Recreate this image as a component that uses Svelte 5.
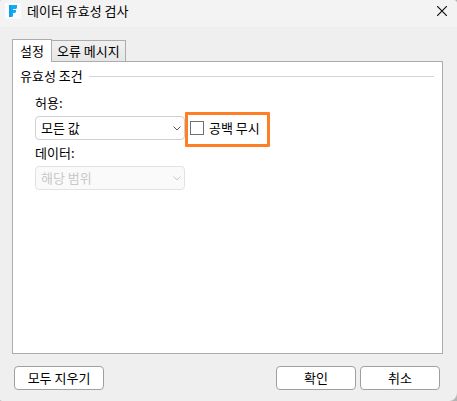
<script lang="ts">
	let activeTab = 'settings';
	let allow = 'any';
	let range = 'between';
	let ignoreBlank = false;

	const tabs = [
		{ id: 'settings', label: '설정' },
		{ id: 'error', label: '오류 메시지' }
	];

	const clearAll = () => {
		allow = 'any';
		range = 'between';
		ignoreBlank = false;
	};
</script>

<div class="dialog" role="dialog" aria-labelledby="dialog-title">
	<header>
		<svg class="logo" viewBox="0 0 16 16" aria-hidden="true">
			<rect width="16" height="16" rx="1" fill="#fcfcfc" />
			<path d="M4 2h8v3l-1 1H8v1h3v2l-1 1H8v3l-1 1H4z" fill="#12aaf0" />
			<path d="M4 2h2v12H4z" fill="#1688dc" opacity="0.4" />
		</svg>
		<h1 id="dialog-title">데이터 유효성 검사</h1>
		<button class="close" aria-label="닫기">
			<svg viewBox="0 0 10 10" aria-hidden="true">
				<path d="M0 0l10 10M10 0L0 10" stroke="#111" stroke-width="1.2" />
			</svg>
		</button>
	</header>

	<div class="content">
		<div class="tabs" role="tablist">
			{#each tabs as tab}
				<button
					class="tab"
					class:active={activeTab === tab.id}
					role="tab"
					aria-selected={activeTab === tab.id}
					on:click={() => (activeTab = tab.id)}
				>
					{tab.label}
				</button>
			{/each}
		</div>

		<div class="panel" role="tabpanel">
			{#if activeTab === 'settings'}
				<fieldset>
					<legend>유효성 조건</legend>
					<label class="field-label" for="allow">허용:</label>
					<div class="row">
						<div class="select">
							<select id="allow" bind:value={allow}>
								<option value="any">모든 값</option>
								<option value="list">목록</option>
							</select>
							<svg viewBox="0 0 8 5" aria-hidden="true">
								<path d="M0.5 0.5L4 4L7.5 0.5" />
							</svg>
						</div>
						<label class="check">
							<input type="checkbox" bind:checked={ignoreBlank} />
							공백 무시
						</label>
					</div>
					<label class="field-label" for="range">데이터:</label>
					<div class="row">
						<div class="select">
							<select id="range" bind:value={range} disabled={allow === 'any'}>
								<option value="between">해당 범위</option>
							</select>
							<svg viewBox="0 0 8 5" aria-hidden="true">
								<path d="M0.5 0.5L4 4L7.5 0.5" />
							</svg>
						</div>
					</div>
				</fieldset>
			{/if}
		</div>
	</div>

	<footer>
		<button class="btn wide" on:click={clearAll}>모두 지우기</button>
		<button class="btn">확인</button>
		<button class="btn">취소</button>
	</footer>
</div>

<style>
	:global(body) {
		background: #b5b5b5;
	}

	.dialog,
	.dialog :global(*) {
		box-sizing: border-box;
	}

	.dialog {
		display: flex;
		flex-direction: column;
		min-height: 100vh;
		background: #efefef;
		border-radius: 2px 4px 8px 2px;
		color: #000;
		font-family: 'Noto Sans CJK KR', sans-serif;
		font-size: 13px;
		line-height: 20px;
	}

	button,
	select {
		font: inherit;
		color: inherit;
	}

	header {
		display: flex;
		align-items: center;
		height: 27px;
		padding: 0 10px 5px 5px;
		background: #f3f3f3;
		border-radius: 2px 4px 0 0;
	}

	.logo {
		width: 16px;
		height: 16px;
		margin-right: 6px;
	}

	h1 {
		flex: 1;
		margin: 0;
		font-size: 13px;
		font-weight: normal;
		line-height: 20px;
	}

	.close {
		display: flex;
		padding: 0;
		border: none;
		background: none;
	}

	.close svg {
		width: 10px;
		height: 10px;
	}

	.content {
		flex: 1;
		display: flex;
		flex-direction: column;
		padding: 12px 14px 0 12px;
	}

	.tabs {
		display: flex;
		align-items: flex-end;
	}

	.tab {
		height: 21px;
		margin-left: -1px;
		padding: 0 5px;
		border: 1px solid #acacac;
		border-bottom: none;
		background: linear-gradient(#f0f0f0, #e6e6e6);
		line-height: 18px;
	}

	.tab.active {
		z-index: 1;
		height: 23px;
		margin: 0 0 -1px;
		padding: 0 7px;
		background: #fff;
	}

	.panel {
		flex: 1;
		padding: 4px 8px 12px 7px;
		border: 1px solid #acacac;
		background: #fff;
	}

	fieldset {
		min-width: 0;
		margin: 0;
		padding: 8px 0 0 15px;
		border: none;
		border-top: 1px solid #d5d5d5;
	}

	legend {
		margin-left: -15px;
		padding: 0 6px 0 0;
	}

	.field-label {
		display: block;
		height: 22px;
		line-height: 18px;
	}

	.row {
		display: flex;
		align-items: center;
		gap: 5px;
		margin-bottom: 4px;
	}

	.select {
		position: relative;
		width: 150px;
	}

	select {
		display: block;
		width: 100%;
		height: 24px;
		padding: 0 20px 0 5px;
		border: 1px solid #d0d0d0;
		border-radius: 4px;
		background: #fff;
		appearance: none;
	}

	select:disabled {
		border-color: #e2e2e2;
		background: #fafafa;
		color: #c8c8c8;
		opacity: 1;
	}

	.select svg {
		position: absolute;
		top: 10px;
		right: 4px;
		width: 8px;
		height: 5px;
		fill: none;
		stroke: #555;
		pointer-events: none;
	}

	select:disabled + svg {
		stroke: #c8c8c8;
	}

	.check {
		position: relative;
		display: flex;
		align-items: center;
		gap: 5px;
	}

	/* highlight frame around the option */
	.check::after {
		content: '';
		position: absolute;
		inset: -6px -10px -9px -5px;
		border: 3px solid #ff7f27;
		border-radius: 1px;
		pointer-events: none;
	}

	.check input {
		width: 14px;
		height: 14px;
		margin: 0;
		border: 1px solid #707070;
		background: #fff;
		appearance: none;
	}

	.check input:checked {
		background: #555;
		box-shadow: inset 0 0 0 2px #fff;
	}

	footer {
		display: flex;
		gap: 4px;
		padding: 12px 17px 11px 14px;
	}

	.btn {
		width: 80px;
		height: 24px;
		padding: 0;
		border: 1px solid #a0a0a0;
		border-radius: 4px;
		background: #fff;
		line-height: 20px;
	}

	.btn.wide {
		width: 90px;
		margin-right: auto;
	}
</style>
